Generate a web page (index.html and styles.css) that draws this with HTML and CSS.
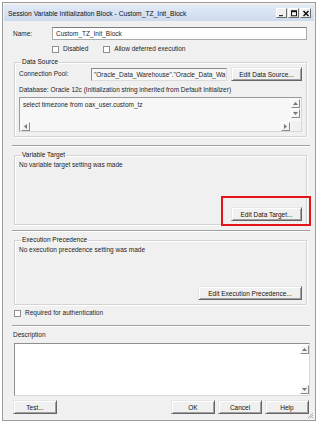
FILE: index.html
```html
<!DOCTYPE html>
<html lang="en">
<head>
  <meta charset="UTF-8">
  <title>Session Variable Initialization Block - Custom_TZ_Init_Block</title>
  <link rel="stylesheet" href="styles.css">
</head>
<body>
  <div class="window">
    <div class="titlebar">
      <span class="title">Session Variable Initialization Block - Custom_TZ_Init_Block</span>
      <div class="controls">
        <span class="ctl"><svg width="8" height="7" viewBox="0 0 8 7"><rect x="1" y="5" width="4" height="1.2" fill="#333"/></svg></span>
        <span class="ctl"><svg width="8" height="7" viewBox="0 0 8 7"><rect x="1.5" y="0.8" width="5" height="5" fill="none" stroke="#111" stroke-width="1"/><rect x="1.5" y="0.8" width="5" height="1.4" fill="#111"/></svg></span>
        <span class="ctl"><svg width="8" height="7" viewBox="0 0 8 7"><path d="M1.5 1 L6.5 6 M6.5 1 L1.5 6" stroke="#111" stroke-width="1.5"/></svg></span>
      </div>
    </div>

    <div class="content">
      <div class="name-row">
        <span class="label name-label">Name:</span>
        <div class="field name-field">Custom_TZ_Init_Block</div>
      </div>

      <div class="check-row">
        <span class="check"><span class="box"></span>Disabled</span>
        <span class="check"><span class="box"></span>Allow deferred execution</span>
      </div>

      <fieldset class="group source">
        <legend>Data Source</legend>
        <div class="pool-row">
          <span class="label pool-label">Connection Pool:</span>
          <div class="field pool-field">"Oracle_Data_Warehouse"."Oracle_Data_Wa</div>
          <span class="button">Edit Data Source...</span>
        </div>
        <div class="line db-line">Database: Oracle 12c (Initialization string inherited from Default Initializer)</div>
        <div class="sql-box">
          <div class="sql-text">select timezone from oax_user.custom_tz</div>
          <div class="vscroll">
            <span class="arrow"><svg width="5" height="3" viewBox="0 0 5 3"><path d="M0 3 L2.5 0 L5 3 Z" fill="#777"/></svg></span>
            <span class="arrow"><svg width="5" height="3" viewBox="0 0 5 3"><path d="M0 0 L2.5 3 L5 0 Z" fill="#777"/></svg></span>
          </div>
          <div class="hscroll">
            <span class="arrow"><svg width="3" height="5" viewBox="0 0 3 5"><path d="M3 0 L0 2.5 L3 5 Z" fill="#777"/></svg></span>
            <span class="arrow"><svg width="3" height="5" viewBox="0 0 3 5"><path d="M0 0 L3 2.5 L0 5 Z" fill="#777"/></svg></span>
          </div>
          <div class="corner"></div>
        </div>
      </fieldset>

      <div class="sep"></div>

      <fieldset class="group target">
        <legend>Variable Target</legend>
        <div class="line">No variable target setting was made</div>
        <div class="button-row target-buttons">
          <span class="highlight">
            <span class="button">Edit Data Target...</span>
          </span>
        </div>
      </fieldset>

      <div class="sep sep-second"></div>

      <fieldset class="group precedence">
        <legend>Execution Precedence</legend>
        <div class="line">No execution precedence setting was made</div>
        <div class="button-row precedence-buttons">
          <span class="button wide">Edit Execution Precedence...</span>
        </div>
      </fieldset>

      <div class="check-row required-row">
        <span class="check"><span class="box"></span>Required for authentication</span>
      </div>

      <div class="sep sep-third"></div>

      <div class="line desc-label">Description</div>
      <div class="desc-box">
        <div class="desc-text"></div>
        <div class="vscroll desc-scroll">
          <span class="arrow"><svg width="5" height="3" viewBox="0 0 5 3"><path d="M0 3 L2.5 0 L5 3 Z" fill="#777"/></svg></span>
          <span class="arrow"><svg width="5" height="3" viewBox="0 0 5 3"><path d="M0 0 L2.5 3 L5 0 Z" fill="#777"/></svg></span>
        </div>
      </div>

      <div class="footer">
        <span class="button small">Test...</span>
        <div class="footer-right">
          <span class="button small">OK</span>
          <span class="button small">Cancel</span>
          <span class="button small">Help</span>
        </div>
      </div>
    </div>

    <svg class="grip" width="7" height="7" viewBox="0 0 7 7">
      <path d="M6 1 L1 6 M6 3 L3 6 M6 5 L5 6" stroke="#a0a0a0" stroke-width="0.8"/>
    </svg>
  </div>
</body>
</html>
```

FILE: styles.css
```css
* {
  box-sizing: border-box;
}

body {
  margin: 0;
  background: #ffffff;
  font-family: 'Liberation Sans', Arial, sans-serif;
  font-size: 6.5px;
  color: #1e1e1e;
}

.window {
  position: relative;
  margin: 2px 0 0 2px;
  width: 314px;
  height: 419px;
  border: 1px solid #9c9c9c;
  padding: 2px 1px 0 1px;
  background: #f0f0f0;
}

.titlebar {
  display: flex;
  align-items: center;
  justify-content: space-between;
  height: 16px;
  padding: 0 3px 0 4px;
  background: linear-gradient(#e2eaf6, #cddaee);
}

.title {
  font-size: 6.7px;
  color: #111;
}

.controls {
  display: flex;
  gap: 1px;
}

.ctl {
  display: flex;
  align-items: center;
  justify-content: center;
  width: 11px;
  height: 10px;
  background: #f0f0f0;
  border: 1px solid;
  border-color: #ffffff #6b6b6b #6b6b6b #ffffff;
}

.content {
  padding: 0 4px 0 8px;
}

.label,
.line {
  line-height: 8px;
  white-space: nowrap;
}

.name-row {
  display: flex;
  align-items: center;
  margin-top: 6px;
  height: 13px;
}

.name-label {
  width: 40px;
  padding-left: 1px;
}

.field {
  height: 13px;
  line-height: 11px;
  padding: 0 3px;
  background: #ffffff;
  border: 1px solid #a9a9a9;
  border-top-color: #7c7c7c;
  white-space: nowrap;
  overflow: hidden;
}

.name-field {
  flex: 1;
  margin-right: 3px;
}

.check-row {
  display: flex;
  align-items: center;
  gap: 15px;
  margin-top: 5px;
  height: 8px;
  padding-left: 40px;
}

.check {
  display: flex;
  align-items: center;
  gap: 4px;
  line-height: 8px;
}

.box {
  width: 7px;
  height: 7px;
  background: #ffffff;
  border: 1px solid #8e8f8f;
}

.group {
  margin: 0 3px 0 2px;
  padding: 0 4px;
  border: 1px solid #d3d3d3;
  box-shadow: 1px 1px 0 #ffffff, inset 1px 1px 0 #ffffff;
  min-width: 0;
}

.group legend {
  padding: 0 1px;
  margin-left: 2px;
  line-height: 8px;
  color: #111;
}

.source {
  margin-top: 5px;
  padding-top: 1px;
  padding-bottom: 4px;
}

.pool-row {
  display: flex;
  align-items: center;
  height: 14px;
}

.pool-label {
  width: 72px;
}

.pool-field {
  flex: 1;
  min-width: 0;
  margin-right: 4px;
  padding-left: 2px;
  background: #f7f7f7;
  border-color: #8a8a8a #dcdcdc #dcdcdc #8a8a8a;
}

.button {
  display: inline-flex;
  align-items: center;
  justify-content: center;
  width: 71px;
  height: 14px;
  background: #f0f0f0;
  border: 1px solid;
  border-color: #e6e6e6 #666666 #666666 #e6e6e6;
  box-shadow: inset 1px 1px 0 #ffffff, inset -1px -1px 0 #a0a0a0;
  white-space: nowrap;
  color: #111;
}

.button.wide {
  width: 104px;
}

.button.small {
  width: 44px;
  height: 14px;
}

.db-line {
  margin-top: 5px;
}

.sql-box {
  display: grid;
  grid-template-columns: 1fr 10px;
  grid-template-rows: 1fr 10px;
  height: 35px;
  margin-top: 3px;
  background: #f7f7f7;
  border: 1px solid #9a9a9a;
  border-right-color: #d8d8d8;
  border-bottom-color: #d8d8d8;
}

.sql-text {
  padding: 3px 0 0 3px;
  line-height: 8px;
}

.vscroll {
  display: flex;
  flex-direction: column;
  gap: 1px;
  padding-top: 1px;
}

.hscroll {
  display: flex;
  justify-content: space-between;
  align-items: center;
  padding: 0 1px 0 1px;
}

.corner {
  background: #f0f0f0;
}

.arrow {
  display: flex;
  align-items: center;
  justify-content: center;
  width: 9px;
  height: 9px;
  background: #f4f4f4;
  border: 1px solid;
  border-color: #ffffff #8a8a8a #8a8a8a #ffffff;
}

.sep {
  margin-top: 8px;
  height: 2px;
  border-top: 1px solid #a0a0a0;
  border-bottom: 1px solid #ffffff;
}

.target {
  margin-top: 4px;
  padding-top: 2px;
  padding-bottom: 3px;
}

.button-row {
  display: flex;
  justify-content: flex-end;
}

.target-buttons {
  margin-top: 38px;
}

.highlight {
  position: relative;
  display: inline-flex;
}

.highlight::after {
  content: "";
  position: absolute;
  left: -10px;
  right: -9px;
  top: -11px;
  bottom: -5px;
  border: 2px solid #e5131b;
}

.sep-second {
  margin-top: 5px;
}

.precedence {
  margin-top: 4px;
  padding-top: 2px;
  padding-bottom: 4px;
}

.precedence-buttons {
  margin-top: 32px;
}

.required-row {
  margin-top: 4px;
  padding-left: 2px;
}

.sep-third {
  margin-top: 8px;
}

.desc-label {
  margin-top: 4px;
  padding-left: 1px;
}

.desc-box {
  display: flex;
  height: 53px;
  margin: 4px 0 0 2px;
  background: #ffffff;
  border: 1px solid #8f8f8f;
  border-right-color: #d8d8d8;
  border-bottom-color: #d8d8d8;
}

.desc-text {
  flex: 1;
}

.desc-scroll {
  justify-content: space-between;
  padding: 1px 0;
}

.footer {
  display: flex;
  justify-content: space-between;
  margin-top: 4px;
  padding: 0 1px;
}

.footer-right {
  display: flex;
  gap: 3px;
}

.grip {
  position: absolute;
  right: 1px;
  bottom: 1px;
}
```
